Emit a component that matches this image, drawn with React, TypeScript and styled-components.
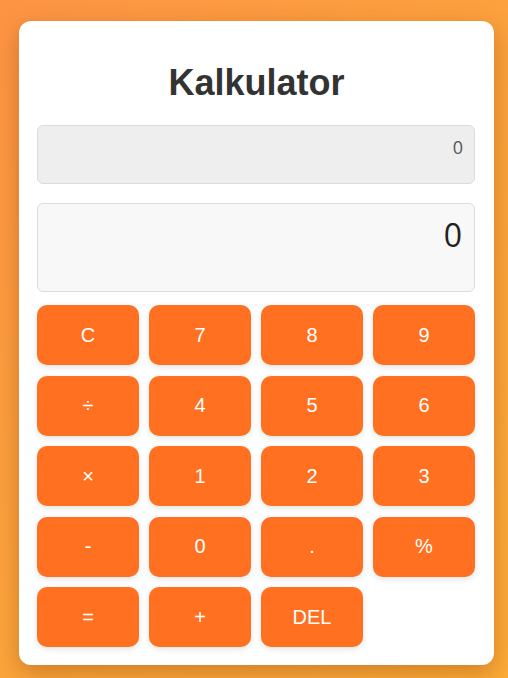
import React from "react";
import styled, { createGlobalStyle } from "styled-components";

const Global = createGlobalStyle`
  html, body { margin: 0; padding: 0; }
  body {
    width: 508px;
    height: 678px;
    overflow: hidden;
    background: linear-gradient(135deg, #fd9444 0%, #fca53c 55%, #fdac38 100%);
    font-family: "Liberation Sans", Arial, sans-serif;
  }
`;

const Page = styled.div`
  display: flex;
  justify-content: center;
  padding: 21px 14px 0 19px;
`;

const Card = styled.div`
  width: 475px;
  height: 644px;
  box-sizing: border-box;
  background: #fff;
  border-radius: 12px;
  box-shadow: 0 8px 24px rgba(120, 50, 0, 0.35);
  padding: 42px 18px 0 18px;
  display: flex;
  flex-direction: column;
`;

const Title = styled.h1`
  margin: 0 0 22px;
  text-align: center;
  font-family: "Liberation Sans", Arial, sans-serif;
  font-size: 36px;
  font-weight: 700;
  color: #333;
  line-height: 40px;
`;

const Screen = styled.div<{ $main?: boolean }>`
  box-sizing: border-box;
  width: 438px;
  height: ${(p) => (p.$main ? "89px" : "59px")};
  margin-bottom: ${(p) => (p.$main ? "13px" : "19px")};
  background: ${(p) => (p.$main ? "#f8f8f8" : "#eeeeee")};
  border: 1px solid #dcdcdc;
  border-radius: 6px;
  padding: ${(p) => (p.$main ? "11px 12px" : "9px 11px")};
  text-align: right;
  font-family: "Open Sans", sans-serif;
  font-size: ${(p) => (p.$main ? "32px" : "18px")};
  line-height: ${(p) => (p.$main ? "40px" : "24px")};
  color: ${(p) => (p.$main ? "#222" : "#555")};
`;

const Keys = styled.div`
  display: grid;
  grid-template-columns: repeat(4, 102px);
  grid-auto-rows: 60px;
  column-gap: 10px;
  row-gap: 10.5px;
`;

const Key = styled.button`
  border: none;
  border-radius: 10px;
  background: #ff7020;
  color: #fff;
  font-family: "Liberation Sans", Arial, sans-serif;
  font-size: 20px;
  box-shadow: 0 2px 6px rgba(0, 0, 0, 0.12);
  cursor: pointer;
  padding: 0;
`;

const keys = ["C", "7", "8", "9", "÷", "4", "5", "6", "×", "1", "2", "3", "-", "0", ".", "%", "=", "+", "DEL"];

export default function App() {
  return (
    <>
      <Global />
      <Page>
        <Card>
          <Title>Kalkulator</Title>
          <Screen>0</Screen>
          <Screen $main>0</Screen>
          <Keys>
            {keys.map((k) => (
              <Key key={k}>{k}</Key>
            ))}
          </Keys>
        </Card>
      </Page>
    </>
  );
}
